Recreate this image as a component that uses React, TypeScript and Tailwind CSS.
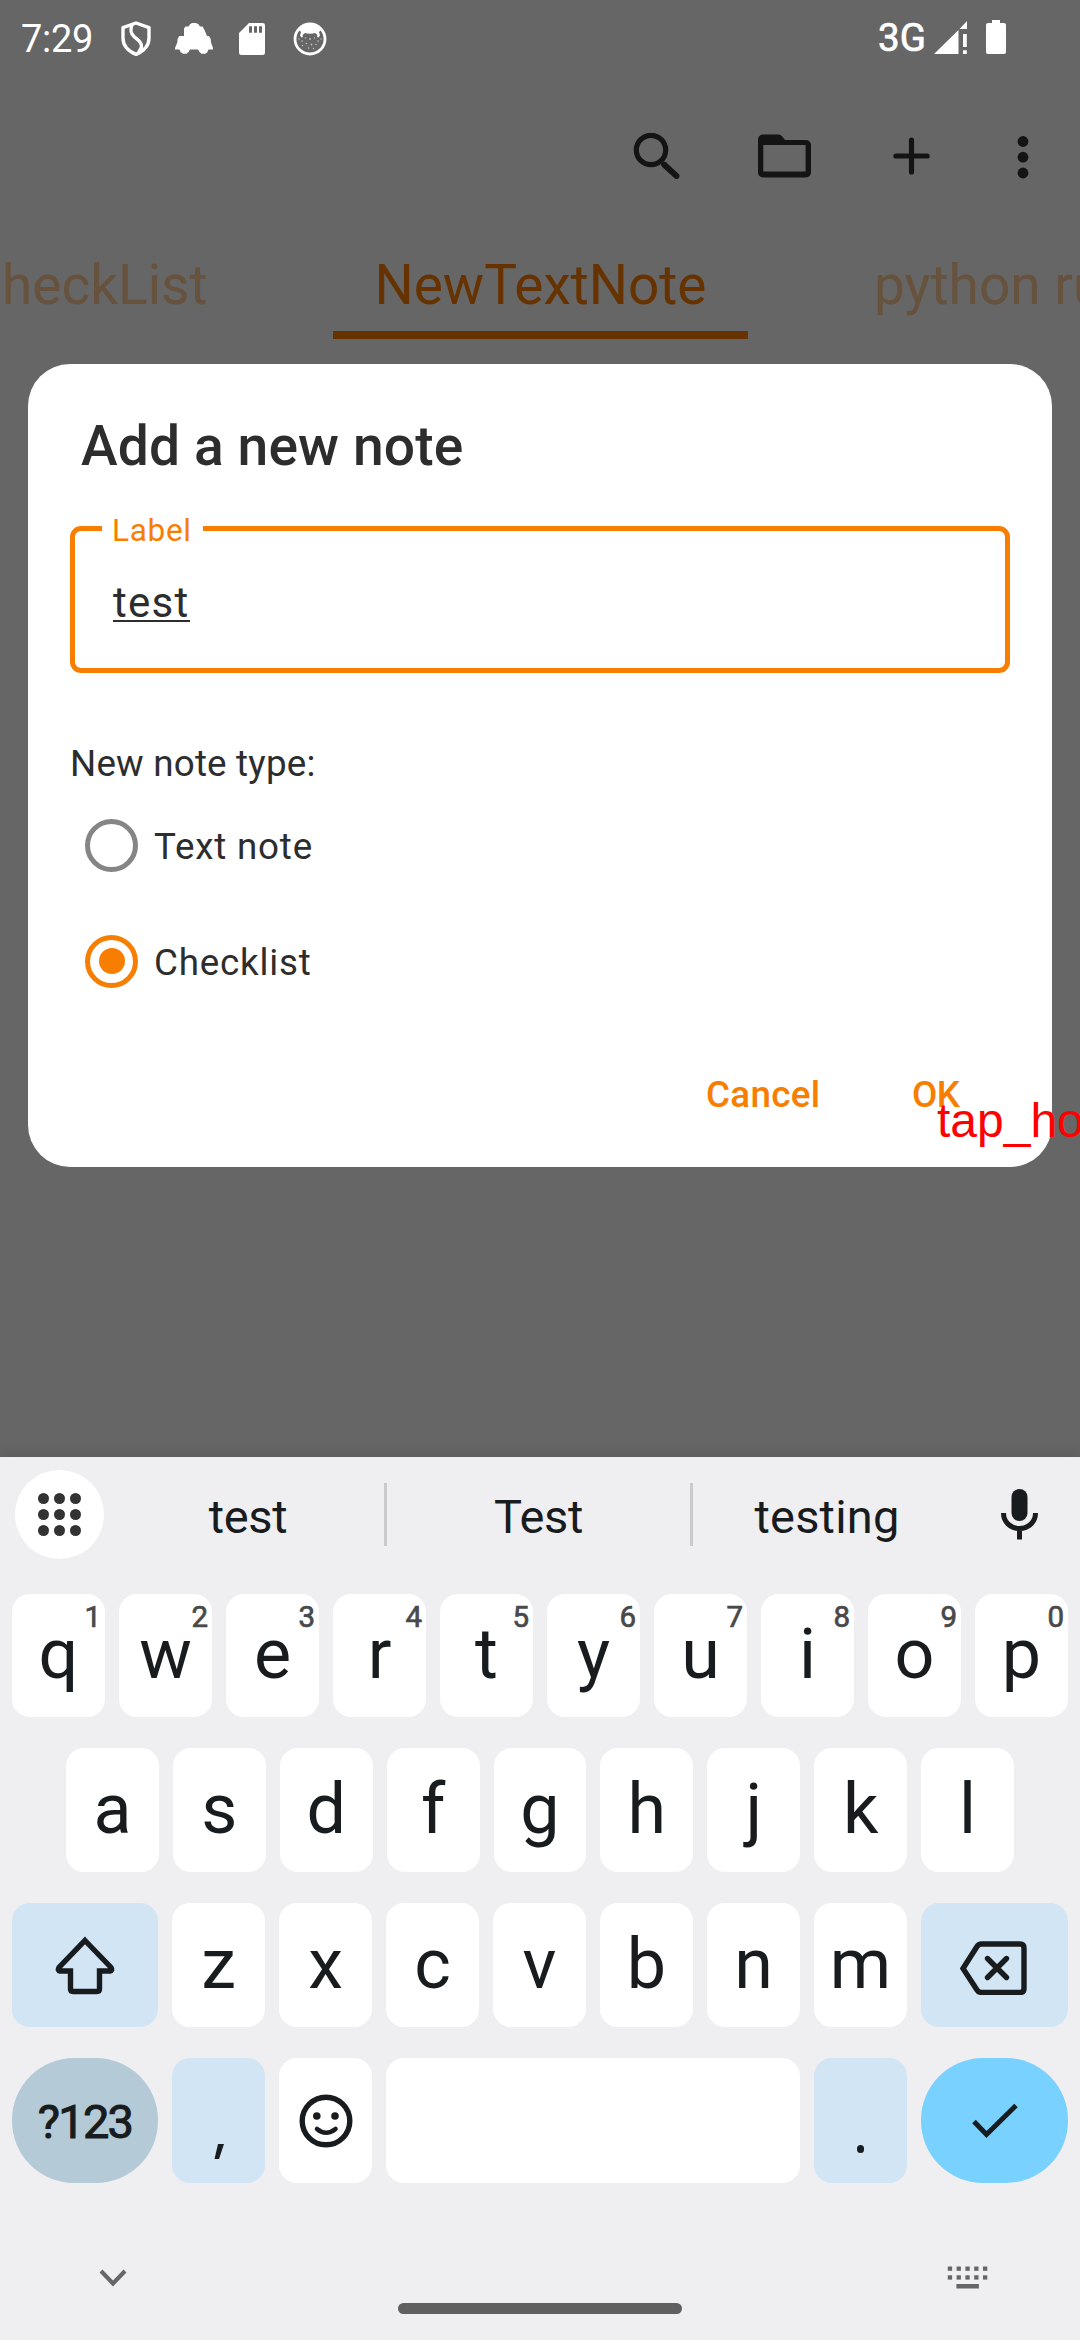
import type { ReactNode } from "react";

const INK = "#191c1e";

function StatusBar() {
  return (
    <div className="flex h-[77px] items-center pl-[21px] text-white">
      <span className="w-[100px] text-[38px] leading-[44px] tracking-[-0.3px]">7:29</span>
      <svg className="h-[35px] w-[30px] shrink-0" viewBox="0 0 30 35" fill="none" stroke="currentColor" strokeWidth="3.4" strokeLinejoin="round">
        <path d="M15 2 28 6.6V17c0 7-5 13-13 16.4C7 30 2 24 2 17V6.600Z" />
        <path d="M11 3.500C9 9 9.500 12 13 15.500c3.500 3.300 8 5.500 7.500 10-.200 2-1.500 4-3 6" />
      </svg>
      <svg className="ml-[24px] h-[31px] w-[38px] shrink-0" viewBox="0 0 38 31" fill="currentColor">
        <path d="M9 5.500 10.500 3.500H13.500L15 1.200 17 0H21L23.500 1.200 25 3.500H27.500L29.500 7 32 13H34L35.700 16 36 19.500 38 25V26.500H33.500L32.500 29 30.500 30.700H26.500L24.500 29 23 26.500H15L13.500 29 11.500 30.700H8L5.500 29 4.500 26.500H0V25L2.300 19.500 2.600 16 4.200 13H9Z" />
      </svg>
      <svg className="ml-[26px] h-[32px] w-[26px] shrink-0" viewBox="0 0 26 32">
        <path fill="currentColor" fillRule="evenodd" d="M10 0H23.500A2.500 2.500 0 0 1 26 2.500V29.500A2.500 2.500 0 0 1 23.500 32H2.500A2.500 2.500 0 0 1 0 29.500V10ZM10 3.200V9.700H13V3.200ZM15 3.200V9.700H18V3.200ZM20 3.200V9.700H23V3.200Z" />
      </svg>
      <svg className="ml-[28px] h-[34px] w-[34px] shrink-0" viewBox="0 0 34 34">
        <circle cx="17" cy="17" r="15" fill="none" stroke="currentColor" strokeWidth="2.800" />
        <path fill="currentColor" d="M6 8C8.500 4 13 2 17 2s8.500 2 11 6l-2 2 1 3.500-1.500 2-1.500-.5.500-2-2.500-2c-3 1-7 1-10 0L9.500 13l.5 2-1.500.5-1.500-2L8 10Z" />
        <g fill="currentColor" opacity="0.6">
          <circle cx="6" cy="17" r=".7" /><circle cx="9" cy="19" r=".8" /><circle cx="12.500" cy="16" r=".7" /><circle cx="17" cy="17" r=".9" />
          <circle cx="21.500" cy="16" r=".7" /><circle cx="25" cy="19" r=".8" /><circle cx="28" cy="17" r=".7" /><circle cx="13.500" cy="21.500" r=".8" />
          <circle cx="18.500" cy="22.500" r=".9" /><circle cx="23" cy="22.500" r=".7" /><circle cx="9.500" cy="23.500" r=".7" /><circle cx="15.500" cy="26" r=".8" />
          <circle cx="20.500" cy="26.500" r=".7" />
        </g>
      </svg>
      <div className="ml-auto flex items-center pr-[74px]">
        <span className="mt-[-1px] w-[56px] text-[38.5px] leading-[44px] [-webkit-text-stroke:0.7px_#ffffff]">3G</span>
        <svg className="mt-[-3px] h-[33px] w-[33px]" viewBox="0 0 33 33" fill="currentColor">
          <path d="M0 33 24.500 9V33ZM25.500 8 33 0V8ZM29 13H32.800V26H29ZM29 29.200H32.800V33H29Z" />
        </svg>
        <svg className="ml-[19px] mt-[-3px] h-[34px] w-[20px]" viewBox="0 0 20 34" fill="currentColor">
          <path d="M6 0H14V3H18A2 2 0 0 1 20 5V32A2 2 0 0 1 18 34H2A2 2 0 0 1 0 32V5A2 2 0 0 1 2 3H6Z" />
        </svg>
      </div>
    </div>
  );
}

function Toolbar() {
  return (
    <div className="flex h-[158px] items-center pl-[633px] text-[#141414]">
      <svg className="h-[46px] w-[47px] shrink-0" viewBox="0 0 47 46" fill="none" stroke="currentColor" strokeLinecap="round">
        <circle cx="18" cy="17" r="14.700" strokeWidth="5.200" />
        <path d="M31 31.500 43.500 43" strokeWidth="5.800" />
      </svg>
      <svg className="ml-[78px] h-[44px] w-[53px] shrink-0" viewBox="0 0 53 44">
        <path fill="currentColor" fillRule="evenodd" d="M5 .5H20.500C22 .5 23 1.200 24 2.300L27 6H48A5 5 0 0 1 53 11V38.500A5 5 0 0 1 48 43.500H5A5 5 0 0 1 0 38.500V5.500A5 5 0 0 1 5 .5ZM5.300 11V37.500H47.600V11Z" />
      </svg>
      <svg className="ml-[82px] h-[38px] w-[37px] shrink-0" viewBox="0 0 37 38" fill="none" stroke="currentColor" strokeWidth="5.200" strokeLinecap="round">
        <path d="M18.500 3V35M2.900 19H34.100" />
      </svg>
      <svg className="ml-[87px] mt-[2px] h-[44px] w-[12px] shrink-0" viewBox="0 0 12 44" fill="currentColor">
        <circle cx="6" cy="6.500" r="5.400" />
        <circle cx="6" cy="22.200" r="5.400" />
        <circle cx="6" cy="38" r="5.400" />
      </svg>
    </div>
  );
}

function Tabs() {
  return (
    <div className="flex h-[104px] overflow-hidden whitespace-nowrap text-[55px] leading-[100px] text-[#66523d]">
      <div className="w-[333px] shrink-0 pl-[2px]">heckList</div>
      <div className="flex w-[415px] shrink-0 flex-col justify-between text-center text-[#663200]">
        <div className="h-[96px]">NewTextNote</div>
        <div className="h-[8px] bg-[#663200]" />
      </div>
      <div className="shrink-0 pl-[126px]">python ru</div>
    </div>
  );
}

function RadioRow({ label, on }: { label: string; on?: boolean }) {
  return (
    <div className="flex h-[116px] items-center pl-[15px]">
      <div
        className={
          on
            ? "flex size-[53px] items-center justify-center rounded-full border-[5.500px] border-[#f77e00]"
            : "size-[53px] rounded-full border-[5.500px] border-[#858585]"
        }
      >
        {on && <div className="size-[26px] rounded-full bg-[#f77e00]" />}
      </div>
      <span className="ml-[16px] mt-[3px] text-[36.75px] leading-[44px] tracking-[0.8px]">{label}</span>
    </div>
  );
}

function Dialog() {
  return (
    <div className="absolute left-[28px] top-[364px] h-[803px] w-[1024px] rounded-[42px] bg-white px-[42px] pt-[50px] text-[#2d2d2d]">
      <h1 className="pl-[11px] text-[55.2px] font-medium leading-[64px] tracking-[0.1px]">Add a new note</h1>
      <div className="relative mt-[48px] h-[147px] rounded-[11px] border-[5px] border-[#f77e00] pl-[38px] pt-[4px]">
        <div className="absolute left-[27px] top-[-16px] w-[101px] bg-white pl-[10px] text-[31.5px] leading-[32px] tracking-[0.7px] text-[#f77e00]">
          Label
        </div>
        <div className="flex h-[133px] items-center">
          <div className="mt-[-4px] flex h-[44px] flex-col border-b-[2px] border-[#2d2d2d] text-[42px] leading-[49px] tracking-[1.3px]">test</div>
        </div>
      </div>
      <div className="mt-[69px] text-[36.75px] leading-[44px] tracking-[0.2px]">New note type:</div>
      <div className="mt-[1px]">
        <RadioRow label="Text note" />
        <RadioRow label="Checklist" on />
      </div>
      <div className="mt-[50px] flex pl-[636px] text-[36.75px] font-medium leading-[52px] text-[#f77e00]">
        <span className="w-[206px] tracking-[0.3px]">Cancel</span>
        <span className="tracking-[-0.5px]">OK</span>
      </div>
    </div>
  );
}

function Key({ children, className = "bg-white flex-1", hint }: { children?: ReactNode; className?: string; hint?: string }) {
  return (
    <div className={"relative flex h-full items-center justify-center rounded-[18px] " + className}>
      {hint && (
        <span className="absolute right-[4px] top-[5px] text-[29.5px] leading-[36px] text-[#47494b] [-webkit-text-stroke:0.7px_#47494b]">
          {hint}
        </span>
      )}
      {children}
    </div>
  );
}

function Letter({ c }: { c: string }) {
  return <span className="mt-[-3px] text-[70px] leading-[80px]">{c}</span>;
}

function Keyboard() {
  return (
    <div className="relative h-[883px] bg-[#efeff2] text-[#191c1e] shadow-[0_0_14px_rgba(0,0,0,0.18)]">
      <div className="flex h-[115px] items-center text-[47px]">
        <div className="ml-[15px] flex size-[89px] items-center justify-center rounded-full bg-white">
          <div className="grid grid-cols-3 gap-x-[5px] gap-y-[5px]">
            {Array.from({ length: 9 }, (_, i) => (
              <div key={i} className="size-[10.800px] rounded-full bg-[#333333]" />
            ))}
          </div>
        </div>
        <span className="ml-[8px] w-[272px] pt-[6px] text-center tracking-[-0.3px]">test</span>
        <div className="h-[63px] w-[3px] bg-[#c9cacc]" />
        <span className="w-[303px] pt-[6px] text-center tracking-[-0.3px]">Test</span>
        <div className="h-[63px] w-[3px] bg-[#c9cacc]" />
        <span className="w-[268px] pt-[6px] text-center tracking-[0.2px]">testing</span>
        <svg className="ml-[40px] h-[51px] w-[37px]" viewBox="0 0 37 51">
          <rect x="10.500" y="0" width="16" height="32" rx="8" fill={INK} />
          <path d="M2.500 24C2.500 33 9.500 39.500 18.500 39.500S34.500 33 34.500 24M18.500 39V50.500" fill="none" stroke={INK} strokeWidth="5" />
        </svg>
      </div>

      <div className="mt-[22px] flex h-[123px] gap-[14px] px-[12px]">
        {"qwertyuiop".split("").map((c, i) => (
          <Key key={c} hint={String((i + 1) % 10)}>
            <Letter c={c} />
          </Key>
        ))}
      </div>
      <div className="mt-[31px] flex h-[124px] gap-[14px] px-[66px]">
        {"asdfghjkl".split("").map((c) => (
          <Key key={c}>
            <Letter c={c} />
          </Key>
        ))}
      </div>
      <div className="mt-[31px] flex h-[124px] gap-[14px] px-[12px]">
        <Key className="w-[146px] bg-[#d2e5f4]">
          <svg className="h-[59px] w-[60px]" viewBox="0 0 60 59" fill="none" stroke={INK} strokeWidth="5.400">
            <path d="M30 4.500 56 31.500Q58 34.500 55 35H44.500V53Q44.500 55.500 42 55.500H18Q15.500 55.500 15.500 53V35H5Q2 34.500 4 31.500Z" />
          </svg>
        </Key>
        {"zxcvbnm".split("").map((c) => (
          <Key key={c}>
            <Letter c={c} />
          </Key>
        ))}
        <Key className="w-[147px] bg-[#d2e5f4]">
          <svg className="ml-[-2px] mt-[5px] h-[54px] w-[67px]" viewBox="0 0 67 54" fill="none" stroke={INK} strokeWidth="5.400">
            <path d="M3 27.500 17 5.500Q18.500 3 21.500 3H60Q64 3 64 7V47.500Q64 51.500 60 51.500H21.500Q18.500 51.500 17 49Z" />
            <path d="M27.500 17.500 46.500 36.500M46.500 17.500 27.500 36.500" strokeLinecap="round" />
          </svg>
        </Key>
      </div>
      <div className="mt-[31px] flex h-[125px] gap-[14px] px-[12px]">
        <Key className="w-[146px] rounded-[62px] bg-[#b4cad7]">
          <span className="mt-[4px] text-[47px] tracking-[-1.700px] [-webkit-text-stroke:1px_#191c1e]">?123</span>
        </Key>
        <Key className="w-[93px] bg-[#d2e5f4]">
          <svg className="mt-[62px] h-[15px] w-[10px]" viewBox="0 0 10 15" fill={INK}>
            <path d="M4 0H10L5 15H.5Z" />
          </svg>
        </Key>
        <Key className="w-[93px] bg-white">
          <svg className="size-[54px]" viewBox="0 0 54 54" fill="none" stroke={INK} strokeWidth="5.400">
            <circle cx="27" cy="27" r="23.800" />
            <circle cx="17.800" cy="22" r="3.800" fill={INK} stroke="none" />
            <circle cx="36" cy="22" r="3.800" fill={INK} stroke="none" />
            <path d="M18 35Q27 42.500 36.500 35" strokeWidth="4.600" strokeLinecap="round" />
          </svg>
        </Key>
        <Key />
        <Key className="w-[93px] bg-[#d2e5f4]">
          <div className="mt-[57px] size-[7.500px] rounded-full bg-[#191c1e]" />
        </Key>
        <Key className="w-[147px] rounded-[62px] bg-[#78d1ff]">
          <svg className="ml-[1px] h-[36px] w-[46px]" viewBox="0 0 46 36" fill="none" stroke={INK} strokeWidth="5">
            <path d="M2 18.500 14.500 31.500 44 2.500" />
          </svg>
        </Key>
      </div>

      <div className="flex items-start pt-[83px]">
        <svg className="ml-[99px] mt-[3px] h-[18px] w-[28px]" viewBox="0 0 28 18" fill="none" stroke="#666666" strokeWidth="4">
          <path d="M2 2 14 14.500 26 2" />
        </svg>
        <div className="ml-[271px] mt-[37px] h-[11px] w-[284px] rounded-full bg-[#606060]" />
        <svg className="ml-[265px] h-[23px] w-[42px]" viewBox="0 0 42 23" fill="#666666">
          {[0, 1, 2, 3, 4].map((i) => (
            <g key={i}>
              <rect x={0.800 + i * 8.800} y="0.500" width="4.300" height="4.300" />
              <rect x={0.800 + i * 8.800} y="9.300" width="4.300" height="4.300" />
            </g>
          ))}
          <rect x="9.400" y="18" width="22.500" height="4.500" />
        </svg>
      </div>
    </div>
  );
}

export default function App() {
  return (
    <div className="relative flex h-[2340px] w-[1080px] flex-col overflow-hidden bg-[#666666] font-['Roboto',sans-serif]">
      <div className="h-[1457px] shrink-0">
        <StatusBar />
        <Toolbar />
        <Tabs />
      </div>
      <Keyboard />
      <Dialog />
      <div className="absolute left-[937px] top-[1093px] whitespace-nowrap font-['Liberation_Sans',Arial,sans-serif] text-[48px] leading-[55px] text-[#ff0000]">
        tap_ho
      </div>
    </div>
  );
}
